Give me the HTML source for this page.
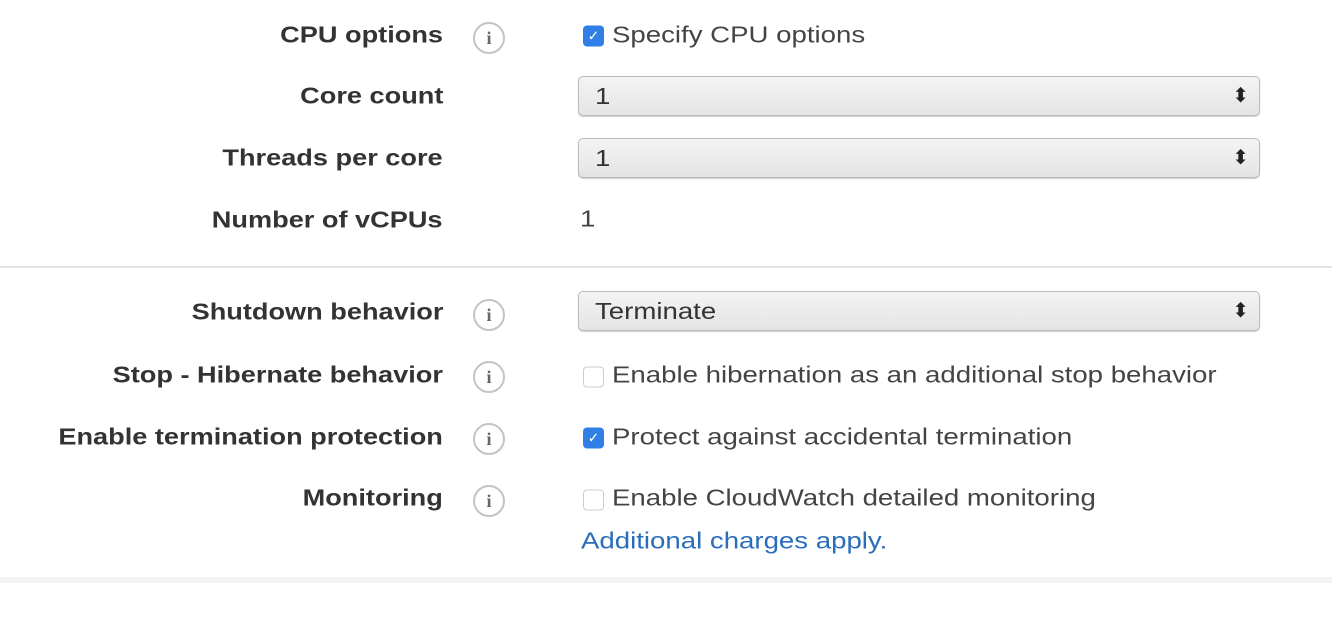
<!DOCTYPE html><html><head><style>
body{margin:0;width:1332px;height:632px;background:#fff;font-family:"Liberation Sans",sans-serif;position:relative;overflow:hidden;color:#333}
.l{position:absolute;right:889px;font-weight:bold;font-size:23px;color:#333;transform:translateY(-50%) scaleX(1.18);transform-origin:right center;white-space:nowrap}
.i{position:absolute;left:473px;width:32px;height:32px;border:2px solid #c4c4c4;border-radius:50%;box-sizing:border-box;transform:translateY(-50%);text-align:center;font:bold 18px/28px "Liberation Serif",serif;color:#666}
.s{position:absolute;left:578px;width:682px;height:40px;border:1px solid #bbb;border-radius:5px;box-sizing:border-box;background:linear-gradient(#f4f4f4,#e4e4e4);transform:translateY(-50%);line-height:38px;color:#333;box-shadow:0 1px 1px #ccc}
.s span{position:absolute;left:16px;font-size:23px;transform:scaleX(1.2);transform-origin:left center}
.s:after{content:"⬍";position:absolute;right:10px;top:0;font-size:20px;color:#222}
.t{position:absolute;left:612px;font-size:23px;transform:translateY(-50%) scaleX(1.2);transform-origin:left center;white-space:nowrap;color:#444}
.c{position:absolute;left:583px;width:21px;height:21px;border-radius:4px;transform:translateY(-50%);box-sizing:border-box}
.on{background:#2f7fe6;color:#fff;font-size:14px;text-align:center;line-height:21px}
.off{border:1px solid #ccc;background:#fff}
</style></head><body>
<div class="l" style="top:35px">CPU options</div><div class="i" style="top:38px">i</div>
<div class="c on" style="top:36px">✓</div><div class="t" style="top:35px">Specify CPU options</div>
<div class="l" style="top:96px">Core count</div><div class="s" style="top:96px"><span>1</span></div>
<div class="l" style="top:158px">Threads per core</div><div class="s" style="top:158px"><span>1</span></div>
<div class="l" style="top:220px">Number of vCPUs</div><div class="t" style="top:219px;left:580px">1</div>
<div style="position:absolute;left:0;top:266px;width:1332px;height:2px;background:#e2e2e2"></div>
<div class="l" style="top:312px">Shutdown behavior</div><div class="i" style="top:315px">i</div><div class="s" style="top:311px"><span>Terminate</span></div>
<div class="l" style="top:375px">Stop - Hibernate behavior</div><div class="i" style="top:377px">i</div>
<div class="c off" style="top:377px"></div><div class="t" style="top:375px">Enable hibernation as an additional stop behavior</div>
<div class="l" style="top:437px">Enable termination protection</div><div class="i" style="top:439px">i</div>
<div class="c on" style="top:438px">✓</div><div class="t" style="top:437px">Protect against accidental termination</div>
<div class="l" style="top:498px">Monitoring</div><div class="i" style="top:501px">i</div>
<div class="c off" style="top:500px"></div><div class="t" style="top:498px">Enable CloudWatch detailed monitoring</div>
<div class="t" style="top:541px;left:581px;color:#2a6ebb">Additional charges apply.</div>
<div style="position:absolute;left:0;top:577px;width:1332px;height:6px;background:#f3f3f3"></div>
</body></html>
